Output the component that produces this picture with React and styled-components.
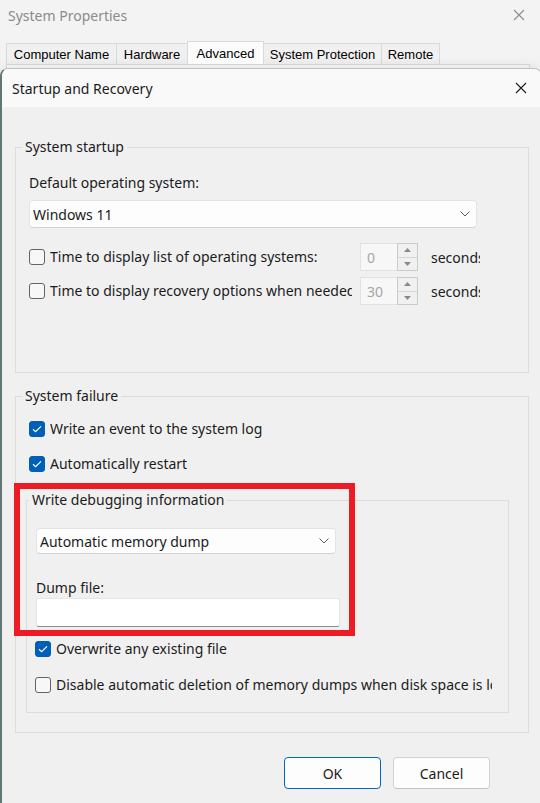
import React from 'react';
import styled, { createGlobalStyle } from 'styled-components';

const GlobalStyle = createGlobalStyle`
  html, body {
    margin: 0;
    padding: 0;
  }

  body {
    background: #f3f3f3;
    font-family: 'Noto Sans', 'Open Sans', sans-serif;
    color: #1b1b1b;
  }

  * {
    box-sizing: border-box;
  }
`;

const Desktop = styled.div`
  position: relative;
  width: 540px;
  height: 803px;
  overflow: hidden;
  background: #f3f3f3;
`;

/* ---- window behind (System Properties) ---- */

const BackTitleBar = styled.div`
  height: 30px;
  padding: 0 15px 0 8px;
  display: flex;
  align-items: center;
  justify-content: space-between;
  font-size: 14px;
  color: #8b8b8b;
`;

const TabStrip = styled.div`
  margin-top: 11px;
  height: 23px;
  padding-left: 6px;
  display: flex;
  align-items: flex-end;
`;

const Tab = styled.div`
  position: relative;
  z-index: ${(p) => (p.$active ? 1 : 0)};
  width: ${(p) => p.$width}px;
  height: ${(p) => (p.$active ? 23 : 21)}px;
  margin-right: -1px;
  display: flex;
  align-items: center;
  justify-content: center;
  font: 13px 'Liberation Sans', Arial, sans-serif;
  color: #000;
  background: ${(p) => (p.$active ? '#fbfbfb' : '#f0f0f0')};
  border: 1px solid #d9d9d9;
  border-bottom: none;
`;

const TabPanel = styled.div`
  height: 60px;
  margin: 0 10px 0 6px;
  background: #f9f9f9;
  border: 1px solid #d9d9d9;
`;

/* ---- Startup and Recovery dialog ---- */

const Dialog = styled.div`
  position: absolute;
  top: 68px;
  left: 0;
  width: 542px;
  bottom: -10px;
  background: #f0f0f0;
  border: 1px solid #bcc2c2;
  border-left: 2px solid #627676;
  border-radius: 8px 8px 0 0;
  box-shadow: 0 4px 16px rgba(0, 0, 0, 0.18);
  overflow: hidden;
`;

const DialogTitleBar = styled.div`
  height: 38px;
  padding-left: 10px;
  display: flex;
  align-items: center;
  justify-content: space-between;
  background: #f9f9f9;
  font-size: 14px;
`;

const CloseButton = styled.div`
  width: 40px;
  height: 38px;
  display: flex;
  align-items: center;
  justify-content: center;
`;

const DialogBody = styled.div`
  padding: 30px 0 0 13px;
`;

const GroupBox = styled.fieldset`
  width: ${(p) => p.$width}px;
  min-width: 0;
  margin: ${(p) => p.$top || 0}px 0 0 ${(p) => p.$left || 0}px;
  padding: ${(p) => p.$pad};
  border: 1px solid #dcdcdc;
`;

const Legend = styled.legend`
  margin-left: -7px;
  padding: 0 3px;
  font-size: 14px;
  line-height: 20px;
`;

const FieldLabel = styled.div`
  margin-top: ${(p) => p.$top || 0}px;
  font-size: 14px;
  line-height: ${(p) => p.$lh || 20}px;
`;

const Dropdown = styled.div`
  width: ${(p) => p.$width}px;
  height: ${(p) => p.$height}px;
  margin-top: ${(p) => p.$top || 0}px;
  padding: 0 6px 0 3px;
  display: flex;
  align-items: center;
  justify-content: space-between;
  background: #fdfdfd;
  border: 1px solid #e3e3e3;
  border-bottom-color: #d2d2d2;
  border-radius: 4px;
  font-size: 14px;
`;

const TextInput = styled.div`
  width: ${(p) => p.$width}px;
  height: 29px;
  margin-top: 1px;
  background: #ffffff;
  border: 1px solid #e5e5e5;
  border-bottom-color: #8a8a8a;
  border-radius: 3px;
`;

const Row = styled.div`
  height: ${(p) => p.$height || 20}px;
  margin-top: ${(p) => p.$top || 0}px;
  margin-left: ${(p) => p.$left || 0}px;
  display: flex;
  align-items: center;
`;

const Box = styled.div`
  flex: none;
  width: 16px;
  height: 16px;
  display: flex;
  align-items: center;
  justify-content: center;
  border-radius: 3px;
  background: ${(p) => (p.$checked ? '#005fb8' : '#f7f7f7')};
  border: 1px solid ${(p) => (p.$checked ? '#005fb8' : '#646464')};
`;

const CheckText = styled.div`
  width: ${(p) => (p.$width ? `${p.$width}px` : 'auto')};
  margin-left: 5px;
  overflow: hidden;
  white-space: nowrap;
  font-size: 14px;
  line-height: 20px;
`;

const Spinner = styled.div`
  flex: none;
  width: 58px;
  height: 28px;
  margin-left: ${(p) => p.$gap}px;
  display: flex;
`;

const SpinText = styled.div`
  width: 37px;
  padding-left: 6px;
  display: flex;
  align-items: center;
  background: #f7f7f7;
  border: 1px solid #e2e2e2;
  border-right: none;
  font-size: 14px;
  color: #a6a6a6;
`;

const SpinButtons = styled.div`
  width: 21px;
  display: flex;
  flex-direction: column;
  border: 1px solid #cbcbcb;
`;

const SpinButton = styled.div`
  flex: 1;
  display: flex;
  align-items: center;
  justify-content: center;
  background: #f0f0f0;
  & + & {
    border-top: 1px solid #d6d6d6;
  }
`;

const Seconds = styled.div`
  width: 49px;
  margin-left: 13px;
  overflow: hidden;
  white-space: nowrap;
  font-size: 14px;
`;

const ButtonRow = styled.div`
  margin-top: 24px;
  padding-right: 51px;
  display: flex;
  justify-content: flex-end;
  gap: 12px;
`;

const DialogButton = styled.div`
  width: 97px;
  height: 32px;
  display: flex;
  align-items: center;
  justify-content: center;
  background: #fdfdfd;
  border: 1px solid ${(p) => (p.$primary ? '#0067c0' : '#d2d2d2')};
  border-bottom-color: ${(p) => (p.$primary ? '#0067c0' : '#c2c2c2')};
  border-radius: 4px;
  font-size: 14px;
`;

const Highlight = styled.div`
  position: absolute;
  top: 414px;
  left: 12px;
  width: 341px;
  height: 153px;
  border: 6px solid #ed1c24;
  pointer-events: none;
`;

/* ---- small drawings ---- */

const CloseIcon = ({ color }) => (
  <svg width='12' height='12' viewBox='0 0 12 12'>
    <path d='M1 1L11 11M11 1L1 11' stroke={color} strokeWidth='1.1' fill='none' />
  </svg>
);

const Chevron = () => (
  <svg width='10' height='6' viewBox='0 0 10 6'>
    <path d='M0.5 0.5L5 5L9.5 0.5' stroke='#5c5c5c' strokeWidth='1' fill='none' />
  </svg>
);

const Arrow = ({ up }) => (
  <svg width='7' height='4' viewBox='0 0 7 4'>
    <path d={up ? 'M0 4L3.5 0L7 4Z' : 'M0 0L3.5 4L7 0Z'} fill='#8a8a8a' />
  </svg>
);

const Checkbox = ({ checked }) => (
  <Box $checked={checked}>
    {checked && (
      <svg width='10' height='8' viewBox='0 0 10 8'>
        <path d='M1 4.2L3.6 6.7L9 1.3' stroke='#ffffff' strokeWidth='1.2' fill='none' />
      </svg>
    )}
  </Box>
);

const tabs = [
  { name: 'Computer Name', width: 111 },
  { name: 'Hardware', width: 72 },
  { name: 'Advanced', width: 77 },
  { name: 'System Protection', width: 119 },
  { name: 'Remote', width: 59 },
];

const SpinField = ({ label, value, top }) => (
  <Row $height={28} $top={top}>
    <Checkbox />
    <CheckText $width={302}>{label}</CheckText>
    <Spinner $gap={8}>
      <SpinText>{value}</SpinText>
      <SpinButtons>
        <SpinButton><Arrow up /></SpinButton>
        <SpinButton><Arrow /></SpinButton>
      </SpinButtons>
    </Spinner>
    <Seconds>seconds</Seconds>
  </Row>
);

const App = () => (
  <Desktop>
    <GlobalStyle />

    <BackTitleBar>
      <span>System Properties</span>
      <CloseIcon color='#8e8e8e' />
    </BackTitleBar>
    <TabStrip>
      {tabs.map((t) => (
        <Tab key={t.name} $width={t.width} $active={t.name === 'Advanced'}>{t.name}</Tab>
      ))}
    </TabStrip>
    <TabPanel />

    <Dialog>
      <DialogTitleBar>
        <span>Startup and Recovery</span>
        <CloseButton><CloseIcon color='#1b1b1b' /></CloseButton>
      </DialogTitleBar>

      <DialogBody>
        <GroupBox $width={514} $pad='16px 0 67px 13px'>
          <Legend>System startup</Legend>
          <FieldLabel>Default operating system:</FieldLabel>
          <Dropdown $width={448} $height={28} $top={7}>
            <span>Windows 11</span>
            <Chevron />
          </Dropdown>
          <SpinField label='Time to display list of operating systems:' value='0' top={15} />
          <SpinField label='Time to display recovery options when needed:' value='30' top={6} />
        </GroupBox>

        <GroupBox $width={514} $top={13} $pad='13px 0 19px 13px'>
          <Legend>System failure</Legend>
          <Row>
            <Checkbox checked />
            <CheckText>Write an event to the system log</CheckText>
          </Row>
          <Row $top={15}>
            <Checkbox checked />
            <CheckText>Automatically restart</CheckText>
          </Row>

          <GroupBox $width={483} $top={16} $left={-3} $pad='18px 0 17px 9px'>
            <Legend>Write debugging information</Legend>
            <Dropdown $width={300} $height={26}>
              <span>Automatic memory dump</span>
              <Chevron />
            </Dropdown>
            <FieldLabel $top={25} $lh={18}>Dump file:</FieldLabel>
            <TextInput $width={304} />
            <Row $top={12} $left={-1}>
              <Checkbox checked />
              <CheckText>Overwrite any existing file</CheckText>
            </Row>
            <Row $top={16} $left={-1}>
              <Checkbox />
              <CheckText $width={436}>
                Disable automatic deletion of memory dumps when disk space is low
              </CheckText>
            </Row>
          </GroupBox>
        </GroupBox>

        <ButtonRow>
          <DialogButton $primary>OK</DialogButton>
          <DialogButton>Cancel</DialogButton>
        </ButtonRow>
      </DialogBody>

      <Highlight />
    </Dialog>
  </Desktop>
);

export default App;
